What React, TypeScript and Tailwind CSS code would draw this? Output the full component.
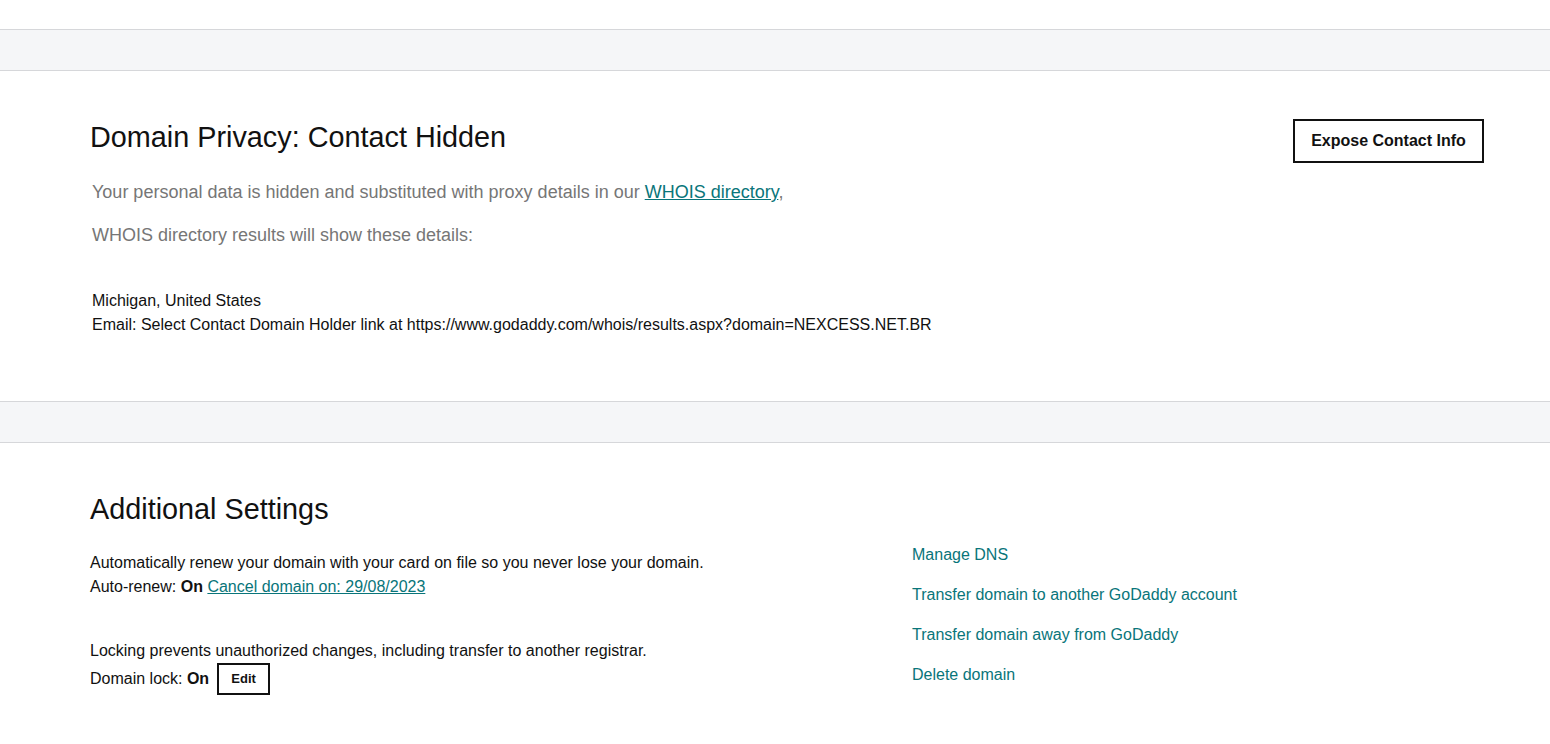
import type { FC } from "react";

const font = { fontFamily: '"Liberation Sans", Arial, sans-serif' };

const Band: FC = () => (
  <div className="h-[42px] border-y border-[#d6d7da] bg-[#f5f6f8]" />
);

const links = [
  "Manage DNS",
  "Transfer domain to another GoDaddy account",
  "Transfer domain away from GoDaddy",
  "Delete domain",
];

const App: FC = () => {
  return (
    <div className="min-h-[744px] bg-white text-[#111111]" style={font}>
      <div className="h-[29px]" />
      <Band />

      {/* PRIVACY */}
      <section className="pl-[90px] pr-[66px] pt-12 pb-[64px]">
        <div className="flex items-start justify-between">
          <h2 className="text-[28.8px] leading-[37px]">Domain Privacy: Contact Hidden</h2>
          <button className="h-[44px] w-[191px] border-2 border-[#111111] text-base font-bold">
            Expose Contact Info
          </button>
        </div>
        <div className="pl-[2px]">
          <p className="mt-4 text-[18px] leading-[27px] text-[#767676]">
            Your personal data is hidden and substituted with proxy details in our{" "}
            <a href="#" className="text-[#09757a] underline">WHOIS directory</a>,
          </p>
          <p className="mt-4 text-[18px] leading-[27px] text-[#767676]">
            WHOIS directory results will show these details:
          </p>
          <div className="mt-[40px] text-base leading-6">
            <div>Michigan, United States</div>
            <div>
              Email: Select Contact Domain Holder link at
              https://www.godaddy.com/whois/results.aspx?domain=NEXCESS.NET.BR
            </div>
          </div>
        </div>
      </section>

      <Band />

      {/* ADDITIONAL SETTINGS */}
      <section className="pl-[90px] pr-[66px] pt-12 pb-12">
        <h2 className="text-[28.8px] leading-[37px]">Additional Settings</h2>
        <div className="mt-[15px] flex">
          <div className="w-[822px] pt-2 text-base leading-6">
            <p>Automatically renew your domain with your card on file so you never lose your domain.</p>
            <p>
              Auto-renew: <b>On</b>{" "}
              <a href="#" className="text-[#09757a] underline">Cancel domain on: 29/08/2023</a>
            </p>
            <p className="mt-[40px]">Locking prevents unauthorized changes, including transfer to another registrar.</p>
            <div className="flex items-center gap-2">
              <span>
                Domain lock: <b>On</b>
              </span>
              <button className="h-[32px] w-[53px] border-2 border-[#111111] text-[13px] font-bold">
                Edit
              </button>
            </div>
          </div>
          <div className="flex flex-col gap-4 text-base leading-6">
            {links.map((l) => (
              <a key={l} href="#" className="text-[#09757a]">
                {l}
              </a>
            ))}
          </div>
        </div>
      </section>
    </div>
  );
};

export default App;
